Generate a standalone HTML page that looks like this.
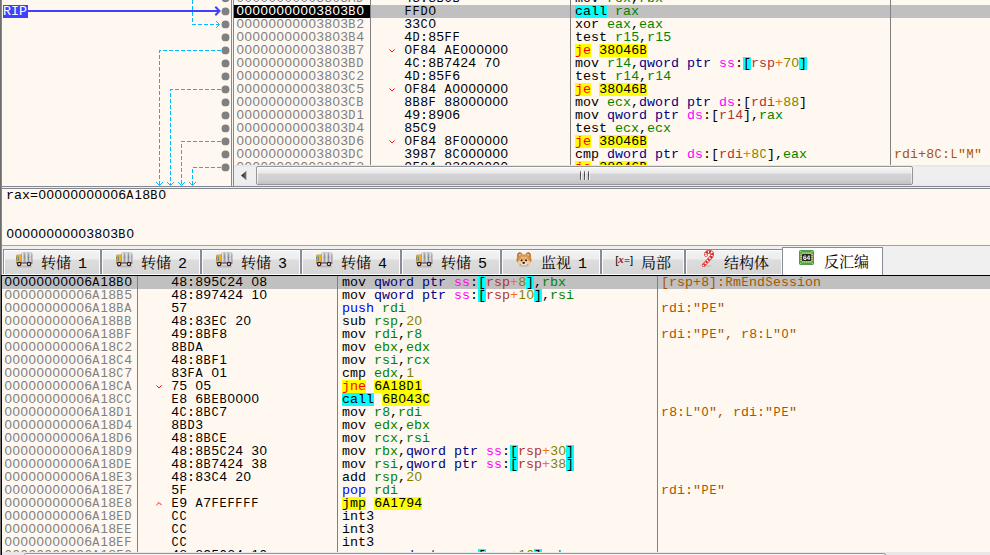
<!DOCTYPE html>
<html lang="zh-CN"><head><meta charset="utf-8"><title>x64dbg</title>
<style>
html,body{margin:0;padding:0}
body{width:990px;height:555px;overflow:hidden;position:relative;background:#FFF8F0;
 font-family:"Liberation Mono","DejaVu Sans Mono",monospace;}
div,svg{position:absolute}
.t{font-family:"Liberation Mono","DejaVu Sans Mono",monospace;font-size:13.3333px;line-height:13px;height:13px;white-space:pre;color:#000;letter-spacing:0}
.addr{color:#808080}
.asel{color:#000}
.cip{color:#fff}
.com{color:#AA5500}
.selrow{height:13px;background:#C0C0C0}
.cipbg{height:13px;background:#000}
.r{color:#008300}.v{color:#828200}.sz{color:#000080}.sg{color:#FF00FF}
.mb{color:#B03434}.op{color:#F27711}.sb{background:#00FFFF}.br{}
.pp{color:#0000FF}
.jc{color:#FF0000;background:#FFFF00}.ju{background:#FFFF00}.ad{background:#FFFF00}.ca{background:#00FFFF}
.t span{display:inline-block;height:13px;line-height:13px;vertical-align:top}
.t span.u{display:inline;font-size:11.9px;letter-spacing:0.8588px;height:auto;vertical-align:baseline;line-height:0;position:relative;left:0.4px}
.t span.d{display:inline;font-family:"Liberation Sans",sans-serif;letter-spacing:0.5846px;height:auto;vertical-align:baseline;line-height:0;position:relative;left:0.5px}
.chev{}
.vl{width:1px}
.hl{height:1px}
.rip{left:3px;top:5px;width:25px;height:13px;background:#4040FF;color:#fff;font-size:13.3333px;line-height:13px;white-space:pre;text-indent:0}
.tab{top:249px;height:24px;border:1px solid #898C95;border-bottom:none;background:linear-gradient(#F3F3F3 0,#EDEDED 9px,#DDDDDD 10px,#D6D6D6 24px);box-shadow:inset 1px 1px 0 #FCFCFC, inset -1px 0 0 #FCFCFC}
.tabsel{top:247px;height:28px;border:1px solid #898C95;border-bottom:none;background:#fff}
.tabtx{font-family:"Liberation Mono","Noto Serif CJK SC","Noto Sans CJK SC",sans-serif;font-size:15px;line-height:20px;height:20px;white-space:pre;color:#000;word-spacing:-2px}
.ico{}
</style></head><body>
<svg style="position:absolute;left:0;top:0" width="231" height="186" viewBox="0 0 231 186" shape-rendering="crispEdges">
<g shape-rendering="auto" fill="#808080">
<circle cx="225.5" cy="-1.6" r="3.95"/>
<circle cx="225.5" cy="11.4" r="3.95"/>
<circle cx="225.5" cy="24.4" r="3.95"/>
<circle cx="225.5" cy="37.4" r="3.95"/>
<circle cx="225.5" cy="50.4" r="3.95"/>
<circle cx="225.5" cy="63.4" r="3.95"/>
<circle cx="225.5" cy="76.4" r="3.95"/>
<circle cx="225.5" cy="89.4" r="3.95"/>
<circle cx="225.5" cy="102.4" r="3.95"/>
<circle cx="225.5" cy="115.4" r="3.95"/>
<circle cx="225.5" cy="128.4" r="3.95"/>
<circle cx="225.5" cy="141.4" r="3.95"/>
<circle cx="225.5" cy="154.4" r="3.95"/>
<circle cx="225.5" cy="167.4" r="3.95"/>
</g>
<path d="M192.5 0 V24.5 H219" stroke="#00BBFF" stroke-width="1" fill="none" stroke-dasharray="4 2"/>
<path d="M216 21 L219.5 24.5 L216 28" stroke="#00BBFF" fill="none" stroke-width="1" shape-rendering="auto"/>
<path d="M221 50.5 H159.5 V185" stroke="#00BBFF" stroke-width="1" fill="none" stroke-dasharray="4 2"/>
<path d="M156.0 182 L159.5 185.5 L163.0 182" stroke="#00BBFF" fill="none" stroke-width="1" shape-rendering="auto"/>
<path d="M221 89.5 H170.5 V185" stroke="#00BBFF" stroke-width="1" fill="none" stroke-dasharray="4 2"/>
<path d="M167.0 182 L170.5 185.5 L174.0 182" stroke="#00BBFF" fill="none" stroke-width="1" shape-rendering="auto"/>
<path d="M221 141.5 H181.5 V185" stroke="#00BBFF" stroke-width="1" fill="none" stroke-dasharray="4 2"/>
<path d="M178.0 182 L181.5 185.5 L185.0 182" stroke="#00BBFF" fill="none" stroke-width="1" shape-rendering="auto"/>
<path d="M221 167.5 H192.5 V185" stroke="#00BBFF" stroke-width="1" fill="none" stroke-dasharray="4 2"/>
<path d="M189.0 182 L192.5 185.5 L196.0 182" stroke="#00BBFF" fill="none" stroke-width="1" shape-rendering="auto"/>
<path d="M28 11 H219" stroke="#4040FF" stroke-width="2" fill="none" shape-rendering="auto"/>
<path d="M215.3 6.8 L219.5 11 L215.3 15.2" stroke="#4040FF" stroke-width="2" fill="none" shape-rendering="auto"/>
</svg>
<div class="rip">RIP</div>
<div id="top" style="left:0;top:0;width:990px;height:165px;overflow:hidden">
<div class="t addr" style="left:236px;top:-8px"><span class="d">00000000003803</span><span class="u">AD</span></div>
<div class="t" style="left:404px;top:-8px"><span class="d">48</span>:<span class="d">8</span><span class="u">BCB</span></div>
<div class="t" style="left:575px;top:-8px">mov <span class="r">rcx</span>,<span class="r">rbx</span></div>
<div class="selrow" style="left:234px;top:5px;width:756px"></div>
<div class="cipbg" style="left:234px;top:5px;width:136px"></div>
<div class="t cip" style="left:236px;top:5px"><span class="d">00000000003803</span><span class="u">B</span><span class="d">0</span></div>
<div class="t" style="left:404px;top:5px"><span class="u">FFD</span><span class="d">0</span></div>
<div class="t" style="left:575px;top:5px"><span class="ca">call</span> <span class="r">rax</span></div>
<div class="t addr" style="left:236px;top:18px"><span class="d">00000000003803</span><span class="u">B</span><span class="d">2</span></div>
<div class="t" style="left:404px;top:18px"><span class="d">33</span><span class="u">C</span><span class="d">0</span></div>
<div class="t" style="left:575px;top:18px">xor <span class="r">eax</span>,<span class="r">eax</span></div>
<div class="t addr" style="left:236px;top:31px"><span class="d">00000000003803</span><span class="u">B</span><span class="d">4</span></div>
<div class="t" style="left:404px;top:31px"><span class="d">4</span><span class="u">D</span>:<span class="d">85</span><span class="u">FF</span></div>
<div class="t" style="left:575px;top:31px">test <span class="r">r<span class="d">15</span></span>,<span class="r">r<span class="d">15</span></span></div>
<div class="t addr" style="left:236px;top:44px"><span class="d">00000000003803</span><span class="u">B</span><span class="d">7</span></div>
<svg class="chev" style="left:389px;top:49px" width="6" height="4" viewBox="0 0 6 4"><polyline points="0.4,0.4 3,3 5.6,0.4" fill="none" stroke="#FF0000" stroke-width="0.95"/></svg>
<div class="t" style="left:404px;top:44px"><span class="d">0</span><span class="u">F</span><span class="d">84</span> <span class="u">AE</span><span class="d">000000</span></div>
<div class="t" style="left:575px;top:44px"><span class="jc">je</span> <span class="ad"><span class="d">38046</span><span class="u">B</span></span></div>
<div class="t addr" style="left:236px;top:57px"><span class="d">00000000003803</span><span class="u">BD</span></div>
<div class="t" style="left:404px;top:57px"><span class="d">4</span><span class="u">C</span>:<span class="d">8</span><span class="u">B</span><span class="d">7424</span> <span class="d">70</span></div>
<div class="t" style="left:575px;top:57px">mov <span class="r">r<span class="d">14</span></span>,<span class="sz">qword ptr</span> <span class="sg">ss</span>:<span class="sb">[</span><span class="mb">rsp</span><span class="op">+</span><span class="v"><span class="d">70</span></span><span class="sb">]</span></div>
<div class="t addr" style="left:236px;top:70px"><span class="d">00000000003803</span><span class="u">C</span><span class="d">2</span></div>
<div class="t" style="left:404px;top:70px"><span class="d">4</span><span class="u">D</span>:<span class="d">85</span><span class="u">F</span><span class="d">6</span></div>
<div class="t" style="left:575px;top:70px">test <span class="r">r<span class="d">14</span></span>,<span class="r">r<span class="d">14</span></span></div>
<div class="t addr" style="left:236px;top:83px"><span class="d">00000000003803</span><span class="u">C</span><span class="d">5</span></div>
<svg class="chev" style="left:389px;top:88px" width="6" height="4" viewBox="0 0 6 4"><polyline points="0.4,0.4 3,3 5.6,0.4" fill="none" stroke="#FF0000" stroke-width="0.95"/></svg>
<div class="t" style="left:404px;top:83px"><span class="d">0</span><span class="u">F</span><span class="d">84</span> <span class="u">A</span><span class="d">0000000</span></div>
<div class="t" style="left:575px;top:83px"><span class="jc">je</span> <span class="ad"><span class="d">38046</span><span class="u">B</span></span></div>
<div class="t addr" style="left:236px;top:96px"><span class="d">00000000003803</span><span class="u">CB</span></div>
<div class="t" style="left:404px;top:96px"><span class="d">8</span><span class="u">B</span><span class="d">8</span><span class="u">F</span> <span class="d">88000000</span></div>
<div class="t" style="left:575px;top:96px">mov <span class="r">ecx</span>,<span class="sz">dword ptr</span> <span class="sg">ds</span>:<span class="br">[</span><span class="mb">rdi</span><span class="op">+</span><span class="v"><span class="d">88</span></span><span class="br">]</span></div>
<div class="t addr" style="left:236px;top:109px"><span class="d">00000000003803</span><span class="u">D</span><span class="d">1</span></div>
<div class="t" style="left:404px;top:109px"><span class="d">49</span>:<span class="d">8906</span></div>
<div class="t" style="left:575px;top:109px">mov <span class="sz">qword ptr</span> <span class="sg">ds</span>:<span class="br">[</span><span class="mb">r<span class="d">14</span></span><span class="br">]</span>,<span class="r">rax</span></div>
<div class="t addr" style="left:236px;top:122px"><span class="d">00000000003803</span><span class="u">D</span><span class="d">4</span></div>
<div class="t" style="left:404px;top:122px"><span class="d">85</span><span class="u">C</span><span class="d">9</span></div>
<div class="t" style="left:575px;top:122px">test <span class="r">ecx</span>,<span class="r">ecx</span></div>
<div class="t addr" style="left:236px;top:135px"><span class="d">00000000003803</span><span class="u">D</span><span class="d">6</span></div>
<svg class="chev" style="left:389px;top:140px" width="6" height="4" viewBox="0 0 6 4"><polyline points="0.4,0.4 3,3 5.6,0.4" fill="none" stroke="#FF0000" stroke-width="0.95"/></svg>
<div class="t" style="left:404px;top:135px"><span class="d">0</span><span class="u">F</span><span class="d">84</span> <span class="d">8</span><span class="u">F</span><span class="d">000000</span></div>
<div class="t" style="left:575px;top:135px"><span class="jc">je</span> <span class="ad"><span class="d">38046</span><span class="u">B</span></span></div>
<div class="t addr" style="left:236px;top:148px"><span class="d">00000000003803</span><span class="u">DC</span></div>
<div class="t" style="left:404px;top:148px"><span class="d">3987</span> <span class="d">8</span><span class="u">C</span><span class="d">000000</span></div>
<div class="t" style="left:575px;top:148px">cmp <span class="sz">dword ptr</span> <span class="sg">ds</span>:<span class="br">[</span><span class="mb">rdi</span><span class="op">+</span><span class="v"><span class="d">8</span><span class="u">C</span></span><span class="br">]</span>,<span class="r">eax</span></div>
<div class="t com" style="left:894px;top:148px">rdi+<span class="d">8</span><span class="u">C</span>:<span class="u">L</span>"<span class="u">M</span>"</div>
<div class="t addr" style="left:236px;top:161px"><span class="d">00000000003803</span><span class="u">E</span><span class="d">2</span></div>
<svg class="chev" style="left:389px;top:166px" width="6" height="4" viewBox="0 0 6 4"><polyline points="0.4,0.4 3,3 5.6,0.4" fill="none" stroke="#FF0000" stroke-width="0.95"/></svg>
<div class="t" style="left:404px;top:161px"><span class="d">0</span><span class="u">F</span><span class="d">84</span> <span class="d">83000000</span></div>
<div class="t" style="left:575px;top:161px"><span class="jc">je</span> <span class="ad"><span class="d">38046</span><span class="u">B</span></span></div>
<div class="vl" style="left:370px;top:0;height:165px;background:#808080"></div>
<div class="vl" style="left:570px;top:0;height:165px;background:#808080"></div>
<div class="vl" style="left:890px;top:0;height:165px;background:#808080"></div>
</div>
<div class="vl" style="left:231px;top:0;height:187px;background:#828790"></div>
<div class="vl" style="left:232px;top:0;height:186px;background:#F4F4F4"></div>
<div class="vl" style="left:233px;top:0;height:187px;background:#828790"></div>
<div style="left:234px;top:165px;width:756px;height:21px;background:linear-gradient(#E4E4E4,#F0F0F0 3px,#EEEEEE 18px,#E8E8E8)"></div>
<svg style="left:240px;top:170px" width="8" height="11" viewBox="0 0 8 11"><defs><linearGradient id="ag" x1="0" x2="1"><stop offset="0" stop-color="#222"/><stop offset="1" stop-color="#777"/></linearGradient></defs><path d="M1 5.5 L6.4 0.8 V10.2Z" fill="url(#ag)"/></svg>
<div style="left:256px;top:166px;width:655px;height:17px;border:1px solid #959595;border-radius:2px;background:linear-gradient(#F5F5F5 0,#EAEAEA 6px,#D4D4D6 7px,#CFCFD1 13px,#C2C2C4 17px);box-shadow:inset 1px 1px 0 rgba(255,255,255,.7),inset -1px 0 0 rgba(255,255,255,.5)"></div>
<div style="left:580px;top:171px;width:1px;height:9px;background:linear-gradient(#8a8a8a,#3c3c3c 40%,#6a6a6a)"></div>
<div style="left:581px;top:171px;width:1px;height:9px;background:#f4f4f4"></div>
<div style="left:584px;top:171px;width:1px;height:9px;background:linear-gradient(#8a8a8a,#3c3c3c 40%,#6a6a6a)"></div>
<div style="left:585px;top:171px;width:1px;height:9px;background:#f4f4f4"></div>
<div style="left:588px;top:171px;width:1px;height:9px;background:linear-gradient(#8a8a8a,#3c3c3c 40%,#6a6a6a)"></div>
<div style="left:589px;top:171px;width:1px;height:9px;background:#f4f4f4"></div>
<div class="hl" style="left:1px;top:186px;width:989px;background:#828790"></div>
<div class="hl" style="left:1px;top:187px;width:989px;background:#F0F0F0"></div>
<div class="hl" style="left:1px;top:188px;width:989px;background:#828790"></div>
<div class="t" style="left:6px;top:189px">rax=<span class="d">00000000006</span><span class="u">A</span><span class="d">18</span><span class="u">B</span><span class="d">0</span></div>
<div class="t" style="left:6px;top:228px"><span class="d">00000000003803</span><span class="u">B</span><span class="d">0</span></div>
<div class="hl" style="left:1px;top:245px;width:989px;background:#A0A0A0"></div>
<div style="left:1px;top:246px;width:989px;height:29px;background:#F0F0F0"></div>
<div class="tab" style="left:3px;width:96px"></div>
<svg class="ico" style="left:16px;top:252px" width="17" height="16" viewBox="0 0 17 16">
<defs><linearGradient id="tg1" x1="0" x2="1" y1="0" y2="0"><stop offset="0" stop-color="#77777f"/><stop offset=".1" stop-color="#e8e8ee"/><stop offset=".22" stop-color="#b4b4be"/><stop offset=".33" stop-color="#7c7c84"/><stop offset=".45" stop-color="#ececf2"/><stop offset=".58" stop-color="#b4b4be"/><stop offset=".67" stop-color="#7c7c84"/><stop offset=".8" stop-color="#e6eae6"/><stop offset=".92" stop-color="#a4b4a8"/><stop offset="1" stop-color="#808080"/></linearGradient>
<linearGradient id="th1" x1="0" x2="0" y1="0" y2="1"><stop offset="0" stop-color="#fff" stop-opacity=".35"/><stop offset=".45" stop-color="#fff" stop-opacity="0"/><stop offset="1" stop-color="#b0b0f0" stop-opacity=".45"/></linearGradient></defs>
<ellipse cx="8.5" cy="14.4" rx="8" ry="1.2" fill="#000" opacity=".16"/>
<path d="M5.2 10.8 V2.4 Q5.2 0.8 6.8 0.8 H14.6 Q16.2 0.8 16.2 2.4 V10.8Z" fill="url(#tg1)" stroke="#9c9ca2" stroke-width=".5"/>
<path d="M5.2 10.8 V2.4 Q5.2 0.8 6.8 0.8 H14.6 Q16.2 0.8 16.2 2.4 V10.8Z" fill="url(#th1)"/>
<rect x="0.3" y="2.9" width="4.9" height="8.4" rx=".9" fill="#f7ba12" stroke="#d9920c" stroke-width=".7"/>
<rect x="0.4" y="4.6" width="2.6" height="3.9" fill="#4a84c6"/>
<rect x="1" y="5.2" width="1.1" height="2.7" fill="#86b2e2"/>
<rect x="0.4" y="10.5" width="16" height="1" fill="#5a4038"/>
<circle cx="3.2" cy="12" r="1.7" fill="#ece6e6" stroke="#34181a" stroke-width="1.2"/>
<circle cx="13" cy="12" r="1.7" fill="#ece6e6" stroke="#34181a" stroke-width="1.2"/>
</svg>
<div class="tabtx" style="left:41px;top:255px">转储 1</div>
<div class="tab" style="left:101px;width:98px"></div>
<svg class="ico" style="left:116px;top:252px" width="17" height="16" viewBox="0 0 17 16">
<defs><linearGradient id="tg2" x1="0" x2="1" y1="0" y2="0"><stop offset="0" stop-color="#77777f"/><stop offset=".1" stop-color="#e8e8ee"/><stop offset=".22" stop-color="#b4b4be"/><stop offset=".33" stop-color="#7c7c84"/><stop offset=".45" stop-color="#ececf2"/><stop offset=".58" stop-color="#b4b4be"/><stop offset=".67" stop-color="#7c7c84"/><stop offset=".8" stop-color="#e6eae6"/><stop offset=".92" stop-color="#a4b4a8"/><stop offset="1" stop-color="#808080"/></linearGradient>
<linearGradient id="th2" x1="0" x2="0" y1="0" y2="1"><stop offset="0" stop-color="#fff" stop-opacity=".35"/><stop offset=".45" stop-color="#fff" stop-opacity="0"/><stop offset="1" stop-color="#b0b0f0" stop-opacity=".45"/></linearGradient></defs>
<ellipse cx="8.5" cy="14.4" rx="8" ry="1.2" fill="#000" opacity=".16"/>
<path d="M5.2 10.8 V2.4 Q5.2 0.8 6.8 0.8 H14.6 Q16.2 0.8 16.2 2.4 V10.8Z" fill="url(#tg2)" stroke="#9c9ca2" stroke-width=".5"/>
<path d="M5.2 10.8 V2.4 Q5.2 0.8 6.8 0.8 H14.6 Q16.2 0.8 16.2 2.4 V10.8Z" fill="url(#th2)"/>
<rect x="0.3" y="2.9" width="4.9" height="8.4" rx=".9" fill="#f7ba12" stroke="#d9920c" stroke-width=".7"/>
<rect x="0.4" y="4.6" width="2.6" height="3.9" fill="#4a84c6"/>
<rect x="1" y="5.2" width="1.1" height="2.7" fill="#86b2e2"/>
<rect x="0.4" y="10.5" width="16" height="1" fill="#5a4038"/>
<circle cx="3.2" cy="12" r="1.7" fill="#ece6e6" stroke="#34181a" stroke-width="1.2"/>
<circle cx="13" cy="12" r="1.7" fill="#ece6e6" stroke="#34181a" stroke-width="1.2"/>
</svg>
<div class="tabtx" style="left:141px;top:255px">转储 2</div>
<div class="tab" style="left:201px;width:98px"></div>
<svg class="ico" style="left:216px;top:252px" width="17" height="16" viewBox="0 0 17 16">
<defs><linearGradient id="tg3" x1="0" x2="1" y1="0" y2="0"><stop offset="0" stop-color="#77777f"/><stop offset=".1" stop-color="#e8e8ee"/><stop offset=".22" stop-color="#b4b4be"/><stop offset=".33" stop-color="#7c7c84"/><stop offset=".45" stop-color="#ececf2"/><stop offset=".58" stop-color="#b4b4be"/><stop offset=".67" stop-color="#7c7c84"/><stop offset=".8" stop-color="#e6eae6"/><stop offset=".92" stop-color="#a4b4a8"/><stop offset="1" stop-color="#808080"/></linearGradient>
<linearGradient id="th3" x1="0" x2="0" y1="0" y2="1"><stop offset="0" stop-color="#fff" stop-opacity=".35"/><stop offset=".45" stop-color="#fff" stop-opacity="0"/><stop offset="1" stop-color="#b0b0f0" stop-opacity=".45"/></linearGradient></defs>
<ellipse cx="8.5" cy="14.4" rx="8" ry="1.2" fill="#000" opacity=".16"/>
<path d="M5.2 10.8 V2.4 Q5.2 0.8 6.8 0.8 H14.6 Q16.2 0.8 16.2 2.4 V10.8Z" fill="url(#tg3)" stroke="#9c9ca2" stroke-width=".5"/>
<path d="M5.2 10.8 V2.4 Q5.2 0.8 6.8 0.8 H14.6 Q16.2 0.8 16.2 2.4 V10.8Z" fill="url(#th3)"/>
<rect x="0.3" y="2.9" width="4.9" height="8.4" rx=".9" fill="#f7ba12" stroke="#d9920c" stroke-width=".7"/>
<rect x="0.4" y="4.6" width="2.6" height="3.9" fill="#4a84c6"/>
<rect x="1" y="5.2" width="1.1" height="2.7" fill="#86b2e2"/>
<rect x="0.4" y="10.5" width="16" height="1" fill="#5a4038"/>
<circle cx="3.2" cy="12" r="1.7" fill="#ece6e6" stroke="#34181a" stroke-width="1.2"/>
<circle cx="13" cy="12" r="1.7" fill="#ece6e6" stroke="#34181a" stroke-width="1.2"/>
</svg>
<div class="tabtx" style="left:241px;top:255px">转储 3</div>
<div class="tab" style="left:301px;width:98px"></div>
<svg class="ico" style="left:316px;top:252px" width="17" height="16" viewBox="0 0 17 16">
<defs><linearGradient id="tg4" x1="0" x2="1" y1="0" y2="0"><stop offset="0" stop-color="#77777f"/><stop offset=".1" stop-color="#e8e8ee"/><stop offset=".22" stop-color="#b4b4be"/><stop offset=".33" stop-color="#7c7c84"/><stop offset=".45" stop-color="#ececf2"/><stop offset=".58" stop-color="#b4b4be"/><stop offset=".67" stop-color="#7c7c84"/><stop offset=".8" stop-color="#e6eae6"/><stop offset=".92" stop-color="#a4b4a8"/><stop offset="1" stop-color="#808080"/></linearGradient>
<linearGradient id="th4" x1="0" x2="0" y1="0" y2="1"><stop offset="0" stop-color="#fff" stop-opacity=".35"/><stop offset=".45" stop-color="#fff" stop-opacity="0"/><stop offset="1" stop-color="#b0b0f0" stop-opacity=".45"/></linearGradient></defs>
<ellipse cx="8.5" cy="14.4" rx="8" ry="1.2" fill="#000" opacity=".16"/>
<path d="M5.2 10.8 V2.4 Q5.2 0.8 6.8 0.8 H14.6 Q16.2 0.8 16.2 2.4 V10.8Z" fill="url(#tg4)" stroke="#9c9ca2" stroke-width=".5"/>
<path d="M5.2 10.8 V2.4 Q5.2 0.8 6.8 0.8 H14.6 Q16.2 0.8 16.2 2.4 V10.8Z" fill="url(#th4)"/>
<rect x="0.3" y="2.9" width="4.9" height="8.4" rx=".9" fill="#f7ba12" stroke="#d9920c" stroke-width=".7"/>
<rect x="0.4" y="4.6" width="2.6" height="3.9" fill="#4a84c6"/>
<rect x="1" y="5.2" width="1.1" height="2.7" fill="#86b2e2"/>
<rect x="0.4" y="10.5" width="16" height="1" fill="#5a4038"/>
<circle cx="3.2" cy="12" r="1.7" fill="#ece6e6" stroke="#34181a" stroke-width="1.2"/>
<circle cx="13" cy="12" r="1.7" fill="#ece6e6" stroke="#34181a" stroke-width="1.2"/>
</svg>
<div class="tabtx" style="left:341px;top:255px">转储 4</div>
<div class="tab" style="left:401px;width:98px"></div>
<svg class="ico" style="left:416px;top:252px" width="17" height="16" viewBox="0 0 17 16">
<defs><linearGradient id="tg5" x1="0" x2="1" y1="0" y2="0"><stop offset="0" stop-color="#77777f"/><stop offset=".1" stop-color="#e8e8ee"/><stop offset=".22" stop-color="#b4b4be"/><stop offset=".33" stop-color="#7c7c84"/><stop offset=".45" stop-color="#ececf2"/><stop offset=".58" stop-color="#b4b4be"/><stop offset=".67" stop-color="#7c7c84"/><stop offset=".8" stop-color="#e6eae6"/><stop offset=".92" stop-color="#a4b4a8"/><stop offset="1" stop-color="#808080"/></linearGradient>
<linearGradient id="th5" x1="0" x2="0" y1="0" y2="1"><stop offset="0" stop-color="#fff" stop-opacity=".35"/><stop offset=".45" stop-color="#fff" stop-opacity="0"/><stop offset="1" stop-color="#b0b0f0" stop-opacity=".45"/></linearGradient></defs>
<ellipse cx="8.5" cy="14.4" rx="8" ry="1.2" fill="#000" opacity=".16"/>
<path d="M5.2 10.8 V2.4 Q5.2 0.8 6.8 0.8 H14.6 Q16.2 0.8 16.2 2.4 V10.8Z" fill="url(#tg5)" stroke="#9c9ca2" stroke-width=".5"/>
<path d="M5.2 10.8 V2.4 Q5.2 0.8 6.8 0.8 H14.6 Q16.2 0.8 16.2 2.4 V10.8Z" fill="url(#th5)"/>
<rect x="0.3" y="2.9" width="4.9" height="8.4" rx=".9" fill="#f7ba12" stroke="#d9920c" stroke-width=".7"/>
<rect x="0.4" y="4.6" width="2.6" height="3.9" fill="#4a84c6"/>
<rect x="1" y="5.2" width="1.1" height="2.7" fill="#86b2e2"/>
<rect x="0.4" y="10.5" width="16" height="1" fill="#5a4038"/>
<circle cx="3.2" cy="12" r="1.7" fill="#ece6e6" stroke="#34181a" stroke-width="1.2"/>
<circle cx="13" cy="12" r="1.7" fill="#ece6e6" stroke="#34181a" stroke-width="1.2"/>
</svg>
<div class="tabtx" style="left:441px;top:255px">转储 5</div>
<div class="tab" style="left:501px;width:98px"></div>
<svg class="ico" style="left:516px;top:252px" width="16" height="15" viewBox="0 0 16 15">
<defs><radialGradient id="dg" cx=".5" cy=".55" r=".6"><stop offset="0" stop-color="#ecb878"/><stop offset=".6" stop-color="#d8944a"/><stop offset="1" stop-color="#a85e22"/></radialGradient></defs>
<ellipse cx="8" cy="14.2" rx="5.5" ry=".7" fill="#000" opacity=".12"/>
<path d="M1.2 5 Q0.5 1.2 3.2 0.3 Q5.3 0 6.5 2.3 Q8 2.9 9.5 2.3 Q10.7 0 12.8 0.3 Q15.5 1.2 14.8 5 Q16.3 8 14.6 10.6 Q12.4 13.9 8 13.9 Q3.6 13.9 1.4 10.6 Q-0.3 8 1.2 5 Z" fill="url(#dg)"/>
<path d="M2.6 4 Q2.4 1.8 3.8 1.4 Q5 1.4 5.4 3Z M13.4 4 Q13.6 1.8 12.2 1.4 Q11 1.4 10.6 3Z" fill="#f0cc98" opacity=".8"/>
<ellipse cx="3.8" cy="10.4" rx="2.3" ry="2" fill="#f4dcae" opacity=".8"/><ellipse cx="12.2" cy="10.4" rx="2.3" ry="2" fill="#f4dcae" opacity=".8"/>
<ellipse cx="8" cy="11.4" rx="3" ry="2.2" fill="#f6e2bc"/>
<path d="M5.6 5.4 L7 6.2 M10.4 5.4 L9 6.2" stroke="#f6e2bc" stroke-width=".9"/>
<circle cx="4.6" cy="7.9" r=".8" fill="#fff"/><circle cx="10.9" cy="7.9" r=".8" fill="#fff"/>
<circle cx="5.5" cy="8.2" r="1" fill="#2a1620"/><circle cx="10.1" cy="8.2" r="1" fill="#2a1620"/>
<path d="M6.2 10.2 Q7.7 9.6 9.2 10.2 Q9 11.9 7.7 12 Q6.4 11.9 6.2 10.2Z" fill="#2a1420"/>
</svg>
<div class="tabtx" style="left:541px;top:255px">监视 1</div>
<div class="tab" style="left:601px;width:82px"></div>
<svg class="ico" style="left:615px;top:252px" width="19" height="16" viewBox="0 0 19 16"><text x="0.2" y="11.6" font-family="Liberation Sans,sans-serif" font-size="11.5" fill="#111">[</text><text x="3.2" y="11.2" font-family="Liberation Serif,serif" font-style="italic" font-weight="bold" font-size="11" fill="#8B1A1A">x</text><text x="9.2" y="11.6" font-family="Liberation Sans,sans-serif" font-weight="bold" font-size="9.5" fill="#6c6c6c">=</text><text x="15" y="11.6" font-family="Liberation Sans,sans-serif" font-size="11.5" fill="#111">]</text></svg>
<div class="tabtx" style="left:641px;top:255px">局部</div>
<div class="tab" style="left:685px;width:96px"></div>
<svg class="ico" style="left:701px;top:250px" width="14" height="17" viewBox="0 0 14 17">
<ellipse cx="5.5" cy="16" rx="5" ry=".7" fill="#000" opacity=".12"/>
<path d="M2.7 15.2 L9.4 7.8 Q12.4 4.6 10.6 2.6 Q8.4 0.8 6 2.4 Q4.6 3.4 4.9 5" fill="none" stroke="#d42020" stroke-width="3.5" stroke-linecap="round"/>
<path d="M2.7 15.2 L9.4 7.8 Q12.4 4.6 10.6 2.6 Q8.4 0.8 6 2.4 Q4.6 3.4 4.9 5" fill="none" stroke="#ffffff" stroke-width="2.3" stroke-linecap="round"/>
<path d="M2.7 15.2 L9.4 7.8 Q12.4 4.6 10.6 2.6 Q8.4 0.8 6 2.4 Q4.6 3.4 4.9 5" fill="none" stroke="#e02424" stroke-width="2.5" stroke-dasharray="2 1.3"/>
</svg>
<div class="tabtx" style="left:724px;top:255px">结构体</div>
<div class="tabsel" style="left:782px;width:99px"></div>
<svg class="ico" style="left:799px;top:250px;will-change:transform" width="15" height="15" viewBox="0 0 15 15">
<rect x=".4" y=".4" width="14.2" height="14.2" rx="1.3" fill="#44a944" stroke="#2c8a30" stroke-width=".8"/>
<g fill="#ecdc90"><circle cx="1.7" cy="1.7" r=".6"/><circle cx="13.3" cy="1.7" r=".6"/><circle cx="1.7" cy="13.3" r=".6"/><circle cx="13.3" cy="13.3" r=".6"/>
<rect x="3.4" y="2.2" width="1" height="2.2"/><rect x="5.4" y="2.2" width="1" height="2.2"/><rect x="7.4" y="2.2" width="1" height="2.2"/><rect x="9.4" y="2.2" width="1" height="2.2"/><rect x="11.3" y="2.2" width="1" height="2.2"/>
<rect x="3.4" y="10.6" width="1" height="2.2"/><rect x="5.4" y="10.6" width="1" height="2.2"/><rect x="7.4" y="10.6" width="1" height="2.2"/><rect x="9.4" y="10.6" width="1" height="2.2"/><rect x="11.3" y="10.6" width="1" height="2.2"/>
<rect x="1.3" y="4.2" width="1.9" height=".9"/><rect x="1.3" y="6.1" width="1.9" height=".9"/><rect x="1.3" y="8" width="1.9" height=".9"/><rect x="1.3" y="9.9" width="1.9" height=".9"/>
<rect x="12" y="4.2" width="1.9" height=".9"/><rect x="12" y="6.1" width="1.9" height=".9"/><rect x="12" y="8" width="1.9" height=".9"/><rect x="12" y="9.9" width="1.9" height=".9"/></g>
<rect x="3" y="4.1" width="9.2" height="6.8" rx=".6" fill="#262626"/>
<text x="3.9" y="9.9" font-family="Liberation Sans, sans-serif" font-weight="bold" font-size="6.6" fill="#ffffff" text-rendering="geometricPrecision">64</text>
</svg>
<div class="tabtx" style="left:824px;top:254px">反汇编</div>
<div class="hl" style="left:1px;top:274px;width:781px;background:#FFFFFF"></div>
<div id="bot" style="left:0;top:276px;width:990px;height:276px;overflow:hidden">
<div class="selrow" style="left:2px;top:0px;width:988px"></div>
<div class="t asel" style="left:4px;top:0px"><span class="d">00000000006</span><span class="u">A</span><span class="d">18</span><span class="u">B</span><span class="d">0</span></div>
<div class="t" style="left:171px;top:0px"><span class="d">48</span>:<span class="d">895</span><span class="u">C</span><span class="d">24</span> <span class="d">08</span></div>
<div class="t" style="left:342px;top:0px">mov <span class="sz">qword ptr</span> <span class="sg">ss</span>:<span class="sb">[</span><span class="mb">rsp</span><span class="op">+</span><span class="v"><span class="d">8</span></span><span class="sb">]</span>,<span class="r">rbx</span></div>
<div class="t com" style="left:661px;top:0px">[rsp+<span class="d">8</span>]:<span class="u">R</span>m<span class="u">E</span>nd<span class="u">S</span>ession</div>
<div class="t addr" style="left:4px;top:13px"><span class="d">00000000006</span><span class="u">A</span><span class="d">18</span><span class="u">B</span><span class="d">5</span></div>
<div class="t" style="left:171px;top:13px"><span class="d">48</span>:<span class="d">897424</span> <span class="d">10</span></div>
<div class="t" style="left:342px;top:13px">mov <span class="sz">qword ptr</span> <span class="sg">ss</span>:<span class="sb">[</span><span class="mb">rsp</span><span class="op">+</span><span class="v"><span class="d">10</span></span><span class="sb">]</span>,<span class="r">rsi</span></div>
<div class="t addr" style="left:4px;top:26px"><span class="d">00000000006</span><span class="u">A</span><span class="d">18</span><span class="u">BA</span></div>
<div class="t" style="left:171px;top:26px"><span class="d">57</span></div>
<div class="t" style="left:342px;top:26px"><span class="pp">push</span> <span class="r">rdi</span></div>
<div class="t com" style="left:661px;top:26px">rdi:"<span class="u">PE</span>"</div>
<div class="t addr" style="left:4px;top:39px"><span class="d">00000000006</span><span class="u">A</span><span class="d">18</span><span class="u">BB</span></div>
<div class="t" style="left:171px;top:39px"><span class="d">48</span>:<span class="d">83</span><span class="u">EC</span> <span class="d">20</span></div>
<div class="t" style="left:342px;top:39px">sub <span class="r">rsp</span>,<span class="v"><span class="d">20</span></span></div>
<div class="t addr" style="left:4px;top:52px"><span class="d">00000000006</span><span class="u">A</span><span class="d">18</span><span class="u">BF</span></div>
<div class="t" style="left:171px;top:52px"><span class="d">49</span>:<span class="d">8</span><span class="u">BF</span><span class="d">8</span></div>
<div class="t" style="left:342px;top:52px">mov <span class="r">rdi</span>,<span class="r">r<span class="d">8</span></span></div>
<div class="t com" style="left:661px;top:52px">rdi:"<span class="u">PE</span>", r<span class="d">8</span>:<span class="u">L</span>"<span class="u">O</span>"</div>
<div class="t addr" style="left:4px;top:65px"><span class="d">00000000006</span><span class="u">A</span><span class="d">18</span><span class="u">C</span><span class="d">2</span></div>
<div class="t" style="left:171px;top:65px"><span class="d">8</span><span class="u">BDA</span></div>
<div class="t" style="left:342px;top:65px">mov <span class="r">ebx</span>,<span class="r">edx</span></div>
<div class="t addr" style="left:4px;top:78px"><span class="d">00000000006</span><span class="u">A</span><span class="d">18</span><span class="u">C</span><span class="d">4</span></div>
<div class="t" style="left:171px;top:78px"><span class="d">48</span>:<span class="d">8</span><span class="u">BF</span><span class="d">1</span></div>
<div class="t" style="left:342px;top:78px">mov <span class="r">rsi</span>,<span class="r">rcx</span></div>
<div class="t addr" style="left:4px;top:91px"><span class="d">00000000006</span><span class="u">A</span><span class="d">18</span><span class="u">C</span><span class="d">7</span></div>
<div class="t" style="left:171px;top:91px"><span class="d">83</span><span class="u">FA</span> <span class="d">01</span></div>
<div class="t" style="left:342px;top:91px">cmp <span class="r">edx</span>,<span class="v"><span class="d">1</span></span></div>
<div class="t addr" style="left:4px;top:104px"><span class="d">00000000006</span><span class="u">A</span><span class="d">18</span><span class="u">CA</span></div>
<svg class="chev" style="left:156px;top:109px" width="6" height="4" viewBox="0 0 6 4"><polyline points="0.4,0.4 3,3 5.6,0.4" fill="none" stroke="#FF0000" stroke-width="0.95"/></svg>
<div class="t" style="left:171px;top:104px"><span class="d">75</span> <span class="d">05</span></div>
<div class="t" style="left:342px;top:104px"><span class="jc">jne</span> <span class="ad"><span class="d">6</span><span class="u">A</span><span class="d">18</span><span class="u">D</span><span class="d">1</span></span></div>
<div class="t addr" style="left:4px;top:117px"><span class="d">00000000006</span><span class="u">A</span><span class="d">18</span><span class="u">CC</span></div>
<div class="t" style="left:171px;top:117px"><span class="u">E</span><span class="d">8</span> <span class="d">6</span><span class="u">BEB</span><span class="d">0000</span></div>
<div class="t" style="left:342px;top:117px"><span class="ca">call</span> <span class="ad"><span class="d">6</span><span class="u">B</span><span class="d">043</span><span class="u">C</span></span></div>
<div class="t addr" style="left:4px;top:130px"><span class="d">00000000006</span><span class="u">A</span><span class="d">18</span><span class="u">D</span><span class="d">1</span></div>
<div class="t" style="left:171px;top:130px"><span class="d">4</span><span class="u">C</span>:<span class="d">8</span><span class="u">BC</span><span class="d">7</span></div>
<div class="t" style="left:342px;top:130px">mov <span class="r">r<span class="d">8</span></span>,<span class="r">rdi</span></div>
<div class="t com" style="left:661px;top:130px">r<span class="d">8</span>:<span class="u">L</span>"<span class="u">O</span>", rdi:"<span class="u">PE</span>"</div>
<div class="t addr" style="left:4px;top:143px"><span class="d">00000000006</span><span class="u">A</span><span class="d">18</span><span class="u">D</span><span class="d">4</span></div>
<div class="t" style="left:171px;top:143px"><span class="d">8</span><span class="u">BD</span><span class="d">3</span></div>
<div class="t" style="left:342px;top:143px">mov <span class="r">edx</span>,<span class="r">ebx</span></div>
<div class="t addr" style="left:4px;top:156px"><span class="d">00000000006</span><span class="u">A</span><span class="d">18</span><span class="u">D</span><span class="d">6</span></div>
<div class="t" style="left:171px;top:156px"><span class="d">48</span>:<span class="d">8</span><span class="u">BCE</span></div>
<div class="t" style="left:342px;top:156px">mov <span class="r">rcx</span>,<span class="r">rsi</span></div>
<div class="t addr" style="left:4px;top:169px"><span class="d">00000000006</span><span class="u">A</span><span class="d">18</span><span class="u">D</span><span class="d">9</span></div>
<div class="t" style="left:171px;top:169px"><span class="d">48</span>:<span class="d">8</span><span class="u">B</span><span class="d">5</span><span class="u">C</span><span class="d">24</span> <span class="d">30</span></div>
<div class="t" style="left:342px;top:169px">mov <span class="r">rbx</span>,<span class="sz">qword ptr</span> <span class="sg">ss</span>:<span class="sb">[</span><span class="mb">rsp</span><span class="op">+</span><span class="v"><span class="d">30</span></span><span class="sb">]</span></div>
<div class="t addr" style="left:4px;top:182px"><span class="d">00000000006</span><span class="u">A</span><span class="d">18</span><span class="u">DE</span></div>
<div class="t" style="left:171px;top:182px"><span class="d">48</span>:<span class="d">8</span><span class="u">B</span><span class="d">7424</span> <span class="d">38</span></div>
<div class="t" style="left:342px;top:182px">mov <span class="r">rsi</span>,<span class="sz">qword ptr</span> <span class="sg">ss</span>:<span class="sb">[</span><span class="mb">rsp</span><span class="op">+</span><span class="v"><span class="d">38</span></span><span class="sb">]</span></div>
<div class="t addr" style="left:4px;top:195px"><span class="d">00000000006</span><span class="u">A</span><span class="d">18</span><span class="u">E</span><span class="d">3</span></div>
<div class="t" style="left:171px;top:195px"><span class="d">48</span>:<span class="d">83</span><span class="u">C</span><span class="d">4</span> <span class="d">20</span></div>
<div class="t" style="left:342px;top:195px">add <span class="r">rsp</span>,<span class="v"><span class="d">20</span></span></div>
<div class="t addr" style="left:4px;top:208px"><span class="d">00000000006</span><span class="u">A</span><span class="d">18</span><span class="u">E</span><span class="d">7</span></div>
<div class="t" style="left:171px;top:208px"><span class="d">5</span><span class="u">F</span></div>
<div class="t" style="left:342px;top:208px"><span class="pp">pop</span> <span class="r">rdi</span></div>
<div class="t com" style="left:661px;top:208px">rdi:"<span class="u">PE</span>"</div>
<div class="t addr" style="left:4px;top:221px"><span class="d">00000000006</span><span class="u">A</span><span class="d">18</span><span class="u">E</span><span class="d">8</span></div>
<svg class="chev" style="left:156px;top:226px" width="6" height="4" viewBox="0 0 6 4"><polyline points="0.4,3.1 3,0.5 5.6,3.1" fill="none" stroke="#FF0000" stroke-width="0.95"/></svg>
<div class="t" style="left:171px;top:221px"><span class="u">E</span><span class="d">9</span> <span class="u">A</span><span class="d">7</span><span class="u">FEFFFF</span></div>
<div class="t" style="left:342px;top:221px"><span class="ju">jmp</span> <span class="ad"><span class="d">6</span><span class="u">A</span><span class="d">1794</span></span></div>
<div class="t addr" style="left:4px;top:234px"><span class="d">00000000006</span><span class="u">A</span><span class="d">18</span><span class="u">ED</span></div>
<div class="t" style="left:171px;top:234px"><span class="u">CC</span></div>
<div class="t" style="left:342px;top:234px">int<span class="d">3</span></div>
<div class="t addr" style="left:4px;top:247px"><span class="d">00000000006</span><span class="u">A</span><span class="d">18</span><span class="u">EE</span></div>
<div class="t" style="left:171px;top:247px"><span class="u">CC</span></div>
<div class="t" style="left:342px;top:247px">int<span class="d">3</span></div>
<div class="t addr" style="left:4px;top:260px"><span class="d">00000000006</span><span class="u">A</span><span class="d">18</span><span class="u">EF</span></div>
<div class="t" style="left:171px;top:260px"><span class="u">CC</span></div>
<div class="t" style="left:342px;top:260px">int<span class="d">3</span></div>
<div class="t addr" style="left:4px;top:273px"><span class="d">00000000006</span><span class="u">A</span><span class="d">18</span><span class="u">F</span><span class="d">0</span></div>
<div class="t" style="left:171px;top:273px"><span class="d">48</span>:<span class="d">895</span><span class="u">C</span><span class="d">24</span> <span class="d">10</span></div>
<div class="t" style="left:342px;top:273px">mov <span class="sz">qword ptr</span> <span class="sg">ss</span>:<span class="sb">[</span><span class="mb">rsp</span><span class="op">+</span><span class="v"><span class="d">10</span></span><span class="sb">]</span>,<span class="r">rbx</span></div>
<div class="vl" style="left:137px;top:0;height:276px;background:#808080"></div>
<div class="vl" style="left:337px;top:0;height:276px;background:#808080"></div>
<div class="vl" style="left:657px;top:0;height:276px;background:#808080"></div>
</div>
<div class="hl" style="left:1px;top:275px;width:989px;background:#000"></div>
<div class="vl" style="left:1px;top:275px;height:280px;background:#000"></div>
<div style="left:2px;top:552px;width:988px;height:3px;background:#E8E8E8"></div>
<div style="left:24px;top:553px;width:860px;height:4px;border:1px solid #979797;border-radius:2px;background:#F4F4F4"></div>
<div class="vl" style="left:0;top:0;height:555px;background:#6E6E6E"></div>
<div class="vl" style="left:1px;top:0;height:275px;background:#828790"></div>
</body></html>
